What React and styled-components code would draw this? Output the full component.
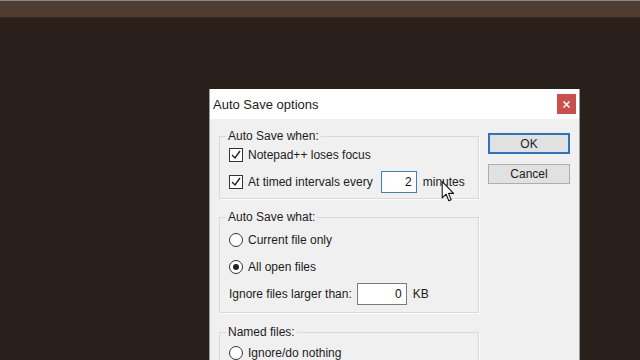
import React from "react";
import styled, { createGlobalStyle } from "styled-components";

const GlobalStyle = createGlobalStyle`
  body {
    margin: 0;
    background: #291f1b;
    font-family: "Liberation Sans", Arial, sans-serif;
  }
`;

const Page = styled.div`
  position: relative;
  width: 640px;
  height: 360px;
  overflow: hidden;
  display: flex;
  flex-direction: column;
`;

const TopBar = styled.div`
  height: 16px;
  flex-shrink: 0;
  border-top: 1px solid #8e8685;
  box-shadow: inset 0 1px 0 #4a403d;
  background: #4f3d34;
  border-bottom: 2px solid #31251f;
`;

const Stage = styled.div`
  flex: 1;
  padding: 70px 0 0 209px;
`;

const Dialog = styled.div`
  width: 369px;
  min-height: 400px;
  background: #f0f0f0;
  border-left: 1px solid #9a9a9a;
  border-right: 1px solid #9a9a9a;
`;

const TitleBar = styled.div`
  height: 30px;
  background: #ffffff;
  display: flex;
  align-items: center;
  justify-content: space-between;
  padding: 0 3px 0 3px;
`;

const Title = styled.span`
  font-size: 13px;
  color: #1c1c1c;
`;

const CloseButton = styled.div`
  width: 19px;
  height: 20px;
  background: #c9514b;
  display: flex;
  align-items: center;
  justify-content: center;
`;

const Body = styled.div`
  display: flex;
  padding: 0 8px 0 9px;
  gap: 9px;
`;

const Groups = styled.div`
  width: 260px;
  flex-shrink: 0;
  padding-top: 10px;
  display: flex;
  flex-direction: column;
`;

const Group = styled.fieldset`
  margin: ${p => p.$mt || 0}px 0 0 0;
  padding: ${p => p.$pt || 0}px 9px ${p => p.$pb || 0}px 9px;
  border: 1px solid #d9d9d9;
  box-shadow: 1px 1px 0 #fbfbfb;
  display: flex;
  flex-direction: column;
  gap: 5px;
  min-width: 0;
`;

const Legend = styled.legend`
  margin-left: -3px;
  padding: 0 2px;
  font-size: 12px;
  line-height: 14px;
  color: #1c1c1c;
`;

const Row = styled.div`
  height: 22px;
  display: flex;
  align-items: center;
  white-space: nowrap;
  font-size: 12px;
  color: #1c1c1c;
`;

const Box = styled.span`
  width: 12px;
  height: 12px;
  border: 1px solid #333;
  background: #fff;
  margin-right: 5px;
  display: flex;
  align-items: center;
  justify-content: center;
  flex-shrink: 0;
`;

const Radio = styled.span`
  width: 12px;
  height: 12px;
  border: 1px solid #333;
  border-radius: 50%;
  background: #fff;
  margin-right: 5px;
  display: flex;
  align-items: center;
  justify-content: center;
  flex-shrink: 0;
  &::after {
    content: "";
    display: ${p => (p.$on ? "block" : "none")};
    width: 6px;
    height: 6px;
    border-radius: 50%;
    background: #222;
  }
`;

const Field = styled.div`
  width: ${p => p.$w}px;
  height: 20px;
  flex-shrink: 0;
  border: 1px solid ${p => (p.$focus ? "#3d80c0" : "#7a7a7a")};
  background: #fff;
  margin: 0 6px 0 ${p => p.$ml || 0}px;
  padding-right: 4px;
  box-sizing: content-box;
  display: flex;
  align-items: center;
  justify-content: flex-end;
  font-size: 12px;
  color: #111;
`;

const Buttons = styled.div`
  width: 82px;
  padding-top: 14px;
  display: flex;
  flex-direction: column;
  gap: 10px;
`;

const Button = styled.div`
  height: ${p => (p.$primary ? 17 : 18)}px;
  border: ${p => (p.$primary ? "2px solid #2e72c4" : "1px solid #adadad")};
  background: #e1e1e1;
  display: flex;
  align-items: center;
  justify-content: center;
  font-size: 12px;
  color: #1c1c1c;
`;

const Pointer = styled.svg`
  position: absolute;
  left: 441px;
  top: 181px;
`;

const Check = () => (
  <svg width="10" height="10" viewBox="0 0 10 10">
    <path d="M1 5 L4 8 L9 1" fill="none" stroke="#222" strokeWidth="1.4" />
  </svg>
);

export default function App() {
  return (
    <Page>
      <GlobalStyle />
      <TopBar />
      <Stage>
        <Dialog>
          <TitleBar>
            <Title>Auto Save options</Title>
            <CloseButton>
              <svg width="7" height="7" viewBox="0 0 7 7">
                <path d="M0.5 0.5 L6.5 6.5 M6.5 0.5 L0.5 6.5" stroke="#fff" strokeWidth="1.5" />
              </svg>
            </CloseButton>
          </TitleBar>
          <Body>
            <Groups>
              <Group $pt={1} $pb={5}>
                <Legend>Auto Save when:</Legend>
                <Row>
                  <Box><Check /></Box>
                  Notepad++ loses focus
                </Row>
                <Row>
                  <Box><Check /></Box>
                  At timed intervals every
                  <Field $w={30} $ml={8} $focus>2</Field>
                  minutes
                </Row>
              </Group>
              <Group $mt={11} $pt={5} $pb={7}>
                <Legend>Auto Save what:</Legend>
                <Row>
                  <Radio />
                  Current file only
                </Row>
                <Row>
                  <Radio $on />
                  All open files
                </Row>
                <Row>
                  Ignore files larger than:
                  <Field $w={44} $ml={5}>0</Field>
                  KB
                </Row>
              </Group>
              <Group $mt={12} $pt={3} $pb={7}>
                <Legend>Named files:</Legend>
                <Row>
                  <Radio />
                  Ignore/do nothing
                </Row>
              </Group>
            </Groups>
            <Buttons>
              <Button $primary>OK</Button>
              <Button>Cancel</Button>
            </Buttons>
          </Body>
        </Dialog>
      </Stage>
      <Pointer width="14" height="21" viewBox="0 0 12 20">
        <path
          d="M0.5 0.5 L0.5 16 L4.2 12.6 L6.8 18.8 L9 17.9 L6.5 11.8 L11.3 11.8 Z"
          fill="#fff"
          stroke="#111"
          strokeWidth="1"
          strokeLinejoin="round"
        />
      </Pointer>
    </Page>
  );
}
